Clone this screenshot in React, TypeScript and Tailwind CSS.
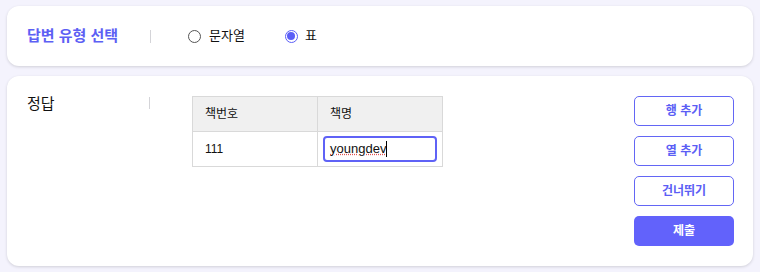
import React from "react";

const font = { fontFamily: '"Liberation Sans", "Noto Sans CJK KR", sans-serif' };

export default function App() {
  return (
    <div className="w-[760px] h-[272px] bg-[#f4f3fd] px-[7px] pt-[6px] flex flex-col gap-[10px]" style={font}>
      <div className="h-[60px] bg-white rounded-[12px] shadow-[0_1px_3px_rgba(0,0,0,0.15)] flex items-center pl-[20px]">
        <div className="w-[123px] text-[15px] font-bold text-[#5d60f4]">답변 유형 선택</div>
        <div className="w-px h-[13px] bg-[#d4d4d8]" />
        <div className="ml-[37px] flex items-center gap-[8px]">
          <span className="w-[13px] h-[13px] rounded-full border border-[#555] bg-white" />
          <span className="text-[13px] text-[#111]">문자열</span>
        </div>
        <div className="ml-[40px] flex items-center gap-[7px]">
          <span className="w-[13px] h-[13px] rounded-full border border-[#5b5ef7] bg-white flex items-center justify-center">
            <span className="w-[8px] h-[8px] rounded-full bg-[#5b5ef7]" />
          </span>
          <span className="text-[13px] text-[#111]">표</span>
        </div>
      </div>

      <div className="h-[190px] bg-white rounded-[12px] shadow-[0_1px_3px_rgba(0,0,0,0.15)] flex pl-[20px] pr-[19px] pt-[20px]">
        <div className="w-[122px] text-[15px] text-[#111] leading-[20px] -mt-[2px]">정답</div>
        <div className="w-px h-[12px] bg-[#d4d4d8] mt-[1px]" />
        <div className="ml-[42px]">
          <table className="border-collapse text-[12px] text-[#111]">
            <tbody>
              <tr className="h-[35px] bg-[#f0f0f0]">
                <td className="w-[125px] border border-[#d9d9d9] pl-[12px]">책번호</td>
                <td className="w-[125px] border border-[#d9d9d9] pl-[12px]">책명</td>
              </tr>
              <tr className="h-[35px]">
                <td className="border border-[#d9d9d9] pl-[12px]">111</td>
                <td className="border border-[#d9d9d9] pl-[5px] pr-[4px]">
                  <div className="w-[114px] h-[26px] border-2 border-[#5f62f6] rounded-[4px] flex items-center px-[5px] text-[13px]">
                    <span className="underline decoration-dotted decoration-[#e05555]">youngdev</span>
                    <span className="w-px h-[16px] bg-black" />
                  </div>
                </td>
              </tr>
            </tbody>
          </table>
        </div>
        <div className="ml-auto flex flex-col gap-[10px] w-[100px]">
          <button className="h-[30px] rounded-[5px] border border-[#6366f5] text-[#5b5ef5] text-[12px] font-bold bg-white">행 추가</button>
          <button className="h-[30px] rounded-[5px] border border-[#6366f5] text-[#5b5ef5] text-[12px] font-bold bg-white">열 추가</button>
          <button className="h-[30px] rounded-[5px] border border-[#6366f5] text-[#5b5ef5] text-[12px] font-bold bg-white">건너뛰기</button>
          <button className="h-[30px] rounded-[5px] bg-[#6262fb] text-white text-[12px] font-bold">제출</button>
        </div>
      </div>
    </div>
  );
}
